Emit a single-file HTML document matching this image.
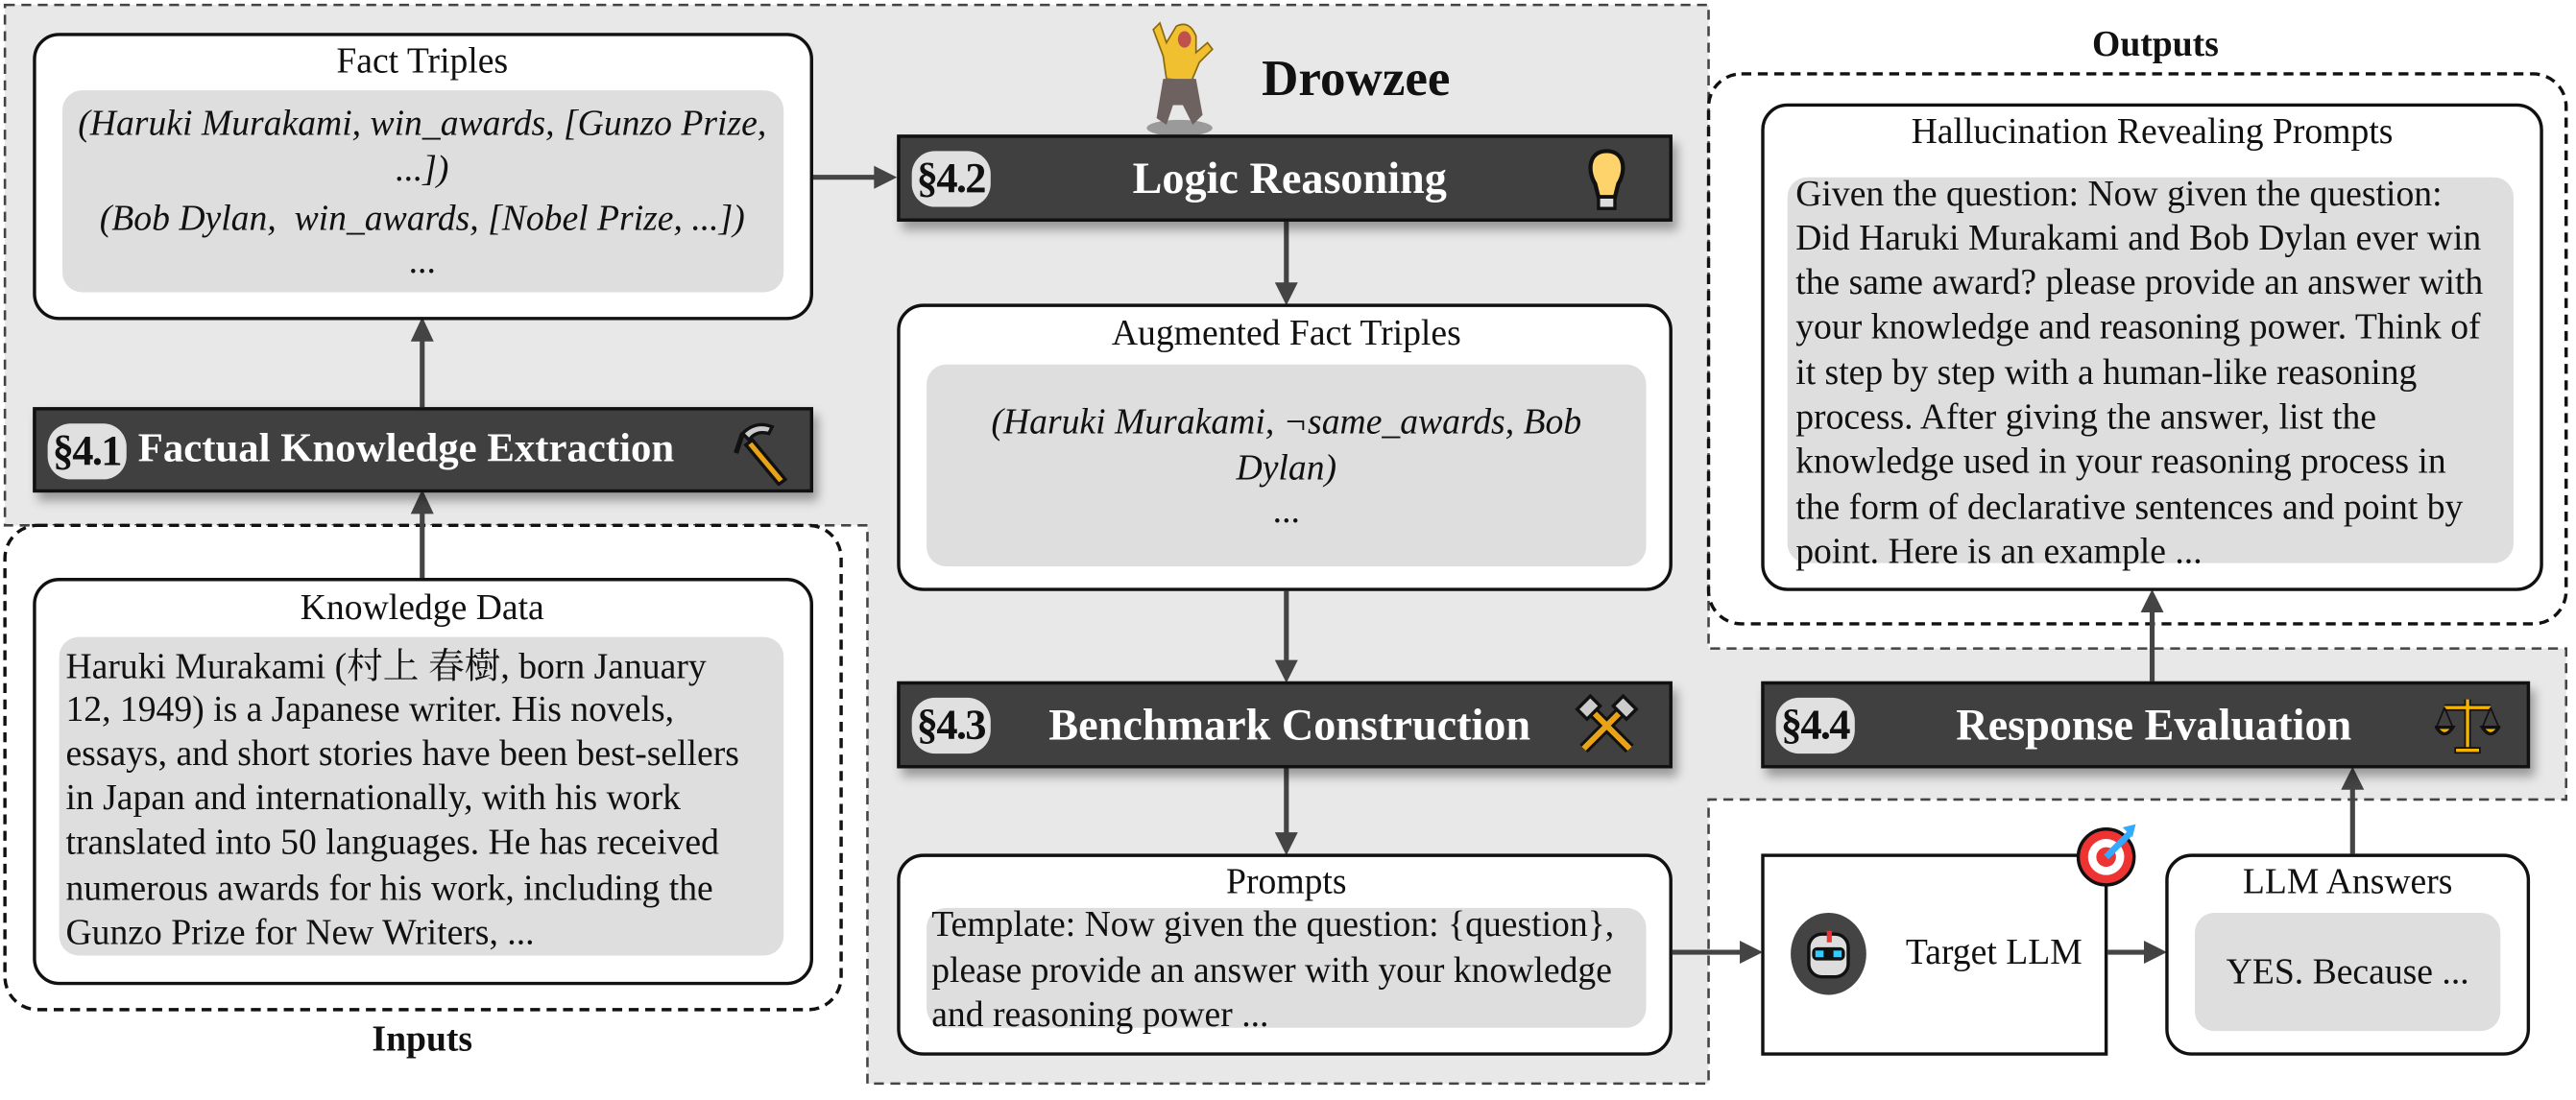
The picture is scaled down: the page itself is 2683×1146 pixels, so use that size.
<!DOCTYPE html>
<html><head><meta charset="utf-8"><style>
html,body{margin:0;padding:0;background:#fff;width:2683px;height:1146px;overflow:hidden}
#s{position:absolute;left:0;top:0;width:1568px;height:670px;transform-origin:0 0;transform:scale(1.7111,1.7104);font-family:"Liberation Serif","Times New Roman",serif;color:#111}
.a{position:absolute}
.cjk{font-family:"Noto Serif CJK SC","Noto Sans CJK SC",serif}
.box{position:absolute;background:#fff;border:2px solid #111;border-radius:16px;box-sizing:border-box}
.in{position:absolute;background:#dedede;border-radius:12px}
.t{position:absolute;white-space:nowrap;font-size:22px;line-height:22px}
.c{text-align:center;transform:translateX(-50%)}
.i{font-style:italic}
.bar{position:absolute;background:#404040;border:2px solid #111;box-sizing:border-box;box-shadow:3px 5px 6px rgba(0,0,0,.35)}
.bt{position:absolute;color:#fff;font-weight:bold;font-size:27px;white-space:nowrap;top:50%;transform:translateY(-50%)}
.bd{position:absolute;background:#e0e0e0;color:#111;font-weight:bold;font-size:26px;border-radius:14px;height:34px;line-height:34px;top:8px;padding:0 3px;letter-spacing:-1px}
</style></head><body><div id="s">
<svg class="a" style="left:0;top:0" width="1568" height="670">
<path d="M3,3 H1040 V395 H1562 V487 H1040 V660 H528 V320 H3 Z" fill="#e8e8e8" stroke="#444" stroke-width="1.5" stroke-dasharray="6,4"/>
<rect x="3" y="320" width="509" height="295" rx="20" fill="#fff" stroke="#111" stroke-width="2" stroke-dasharray="6,4"/>
<rect x="1040" y="45" width="522" height="335" rx="20" fill="none" stroke="#111" stroke-width="2" stroke-dasharray="6,4"/>
<g stroke="#444" stroke-width="3" fill="#444">
<line x1="257" y1="248" x2="257" y2="205"/><path d="M250,208 L257,193 L264,208 Z" stroke="none"/>
<line x1="257" y1="352" x2="257" y2="310"/><path d="M250,313 L257,298 L264,313 Z" stroke="none"/>
<line x1="495" y1="108" x2="535" y2="108"/><path d="M532,101 L546,108 L532,115 Z" stroke="none"/>
<line x1="783" y1="135" x2="783" y2="175"/><path d="M776,172 L783,186 L790,172 Z" stroke="none"/>
<line x1="783" y1="360" x2="783" y2="405"/><path d="M776,402 L783,416 L790,402 Z" stroke="none"/>
<line x1="783" y1="468" x2="783" y2="510"/><path d="M776,507 L783,521 L790,507 Z" stroke="none"/>
<line x1="1018" y1="580" x2="1062" y2="580"/><path d="M1059,573 L1073,580 L1059,587 Z" stroke="none"/>
<line x1="1283" y1="580" x2="1308" y2="580"/><path d="M1305,573 L1319,580 L1305,587 Z" stroke="none"/>
<line x1="1432" y1="520" x2="1432" y2="478"/><path d="M1425,481 L1432,467 L1439,481 Z" stroke="none"/>
<line x1="1310" y1="415" x2="1310" y2="370"/><path d="M1303,373 L1310,359 L1317,373 Z" stroke="none"/>
</g>
</svg>
<div class="t c" style="left:1312px;top:16px;font-weight:bold">Outputs</div>
<div class="t c" style="left:257px;top:622px;font-weight:bold">Inputs</div>

<div class="box" style="left:20px;top:20px;width:475px;height:175px"></div>
<div class="t c" style="left:257px;top:26px">Fact Triples</div>
<div class="in" style="left:38px;top:55px;width:439px;height:123px"></div>
<div class="t c i" style="left:257px;top:64px">(Haruki Murakami, win_awards, [Gunzo Prize,</div>
<div class="t c i" style="left:257px;top:92px">...])</div>
<div class="t c i" style="left:257px;top:122px">(Bob Dylan,&nbsp; win_awards, [Nobel Prize, ...])</div>
<div class="t c" style="left:257px;top:148px">...</div>

<div class="bar" style="left:20px;top:248px;width:475px;height:52px"><div class="bd" style="left:7px">§4.1</div><div class="bt" style="left:62px;font-size:25px">Factual Knowledge Extraction</div>
<svg class="a" style="left:420px;top:6px" width="40" height="40"><path d="M10,8 Q18,0 28,4 L26,8 Q18,6 14,12 Z" fill="#ccc" stroke="#111" stroke-width="2"/><path d="M16,12 L36,36 L32,39 L12,15 Z" fill="#e8a317" stroke="#111" stroke-width="2"/><path d="M10,8 L6,20" stroke="#111" stroke-width="3"/></svg></div>

<div class="box" style="left:20px;top:352px;width:475px;height:248px"></div>
<div class="t c" style="left:257px;top:359px">Knowledge Data</div>
<div class="in" style="left:36px;top:388px;width:441px;height:194px"></div>
<div class="t" style="left:40px;top:394px">Haruki Murakami (<span class="cjk">村上 春樹</span>, born January</div>
<div class="t" style="left:40px;top:421px">12, 1949) is a Japanese writer. His novels,</div>
<div class="t" style="left:40px;top:448px">essays, and short stories have been best-sellers</div>
<div class="t" style="left:40px;top:475px">in Japan and internationally, with his work</div>
<div class="t" style="left:40px;top:502px">translated into 50 languages. He has received</div>
<div class="t" style="left:40px;top:530px">numerous awards for his work, including the</div>
<div class="t" style="left:40px;top:557px">Gunzo Prize for New Writers, ...</div>

<svg class="a" style="left:680px;top:8px" width="85" height="76"><ellipse cx="38" cy="70" rx="20" ry="5" fill="#9a9a9a"/><path d="M22,10 L28,26 L30,40 L45,42 L50,30 L58,22 L55,18 L48,24 L48,14 Q44,4 36,8 L30,18 L26,6 Z" fill="#f0c030" stroke="#8a6a10" stroke-width="1"/><path d="M28,40 L48,40 L52,62 L46,68 L40,56 L34,56 L30,68 L24,64 Z" fill="#6e6260"/><ellipse cx="41" cy="16" rx="4" ry="5" fill="#c0504d"/></svg>
<div class="a" style="left:768px;top:30px;font-size:31px;font-weight:bold;white-space:nowrap">Drowzee</div>

<div class="bar" style="left:546px;top:82px;width:472px;height:53px"><div class="bd" style="left:7px">§4.2</div><div class="bt" style="left:237px;transform:translate(-50%,-50%)">Logic Reasoning</div>
<svg class="a" style="left:415px;top:6px" width="30" height="40"><path d="M15,2 C4,2 3,14 8,22 L10,30 H20 L22,22 C27,14 26,2 15,2 Z" fill="#ffd36b" stroke="#111" stroke-width="2.5"/><rect x="10" y="30" width="10" height="7" fill="#ddd" stroke="#111" stroke-width="2"/></svg></div>

<div class="box" style="left:546px;top:185px;width:472px;height:175px"></div>
<div class="t c" style="left:783px;top:192px">Augmented Fact Triples</div>
<div class="in" style="left:564px;top:222px;width:438px;height:123px"></div>
<div class="t c i" style="left:783px;top:246px">(Haruki Murakami, ¬same_awards, Bob</div>
<div class="t c i" style="left:783px;top:274px">Dylan)</div>
<div class="t c" style="left:783px;top:300px">...</div>

<div class="bar" style="left:546px;top:415px;width:472px;height:53px"><div class="bd" style="left:7px">§4.3</div><div class="bt" style="left:237px;transform:translate(-50%,-50%)">Benchmark Construction</div>
<svg class="a" style="left:410px;top:5px" width="40" height="40"><path d="M6,34 L34,6 M34,34 L6,6" stroke="#111" stroke-width="7"/><path d="M6,34 L34,6 M34,34 L6,6" stroke="#e8a317" stroke-width="3.5"/><path d="M2,10 L10,2 L16,8 L8,16 Z M38,10 L30,2 L24,8 L32,16 Z" fill="#ccc" stroke="#111" stroke-width="2"/></svg></div>

<div class="box" style="left:546px;top:520px;width:472px;height:123px"></div>
<div class="t c" style="left:783px;top:526px">Prompts</div>
<div class="in" style="left:564px;top:553px;width:438px;height:73px"></div>
<div class="t" style="left:567px;top:552px">Template: Now given the question: {question},</div>
<div class="t" style="left:567px;top:580px">please provide an answer with your knowledge</div>
<div class="t" style="left:567px;top:607px">and reasoning power ...</div>

<div class="a" style="left:1072px;top:520px;width:211px;height:123px;border:2px solid #111;background:#fff;box-sizing:border-box"></div>
<svg class="a" style="left:1089px;top:555px" width="48" height="52"><ellipse cx="24" cy="26" rx="23" ry="25" fill="#444"/><rect x="12" y="14" width="24" height="26" rx="8" fill="#ddd" stroke="#111" stroke-width="2"/><rect x="14" y="22" width="20" height="8" rx="3" fill="#111"/><rect x="16" y="24" width="5" height="4" fill="#3cf"/><rect x="27" y="24" width="5" height="4" fill="#3cf"/><rect x="23" y="12" width="3" height="7" fill="#e33"/></svg>
<div class="t" style="left:1160px;top:569px">Target LLM</div>
<svg class="a" style="left:1262px;top:500px" width="42" height="42"><circle cx="20" cy="22" r="17" fill="#e33" stroke="#111" stroke-width="2"/><circle cx="20" cy="22" r="11" fill="#fff"/><circle cx="20" cy="22" r="6" fill="#e33"/><path d="M20,22 L34,8" stroke="#3af" stroke-width="4"/><path d="M30,4 L38,2 L36,10 Z" fill="#3af"/></svg>

<div class="box" style="left:1318px;top:520px;width:222px;height:123px"></div>
<div class="t c" style="left:1429px;top:526px">LLM Answers</div>
<div class="in" style="left:1336px;top:556px;width:186px;height:72px"></div>
<div class="t c" style="left:1429px;top:581px">YES. Because ...</div>

<div class="bar" style="left:1072px;top:415px;width:468px;height:53px"><div class="bd" style="left:7px">§4.4</div><div class="bt" style="left:237px;transform:translate(-50%,-50%)">Response Evaluation</div>
<svg class="a" style="left:408px;top:6px" width="40" height="40"><path d="M20,3 V32 M6,8 H34 M12,34 H28" stroke="#111" stroke-width="4"/><path d="M20,3 V32 M6,8 H34 M13,34 H27" stroke="#f5b400" stroke-width="2"/><path d="M1,20 Q6,28 11,20 Z M29,20 Q34,28 39,20 Z" fill="#f5b400" stroke="#111" stroke-width="2"/><path d="M6,8 L1,20 M6,8 L11,20 M34,8 L29,20 M34,8 L39,20" stroke="#111" stroke-width="1"/></svg></div>

<div class="box" style="left:1072px;top:63px;width:476px;height:297px"></div>
<div class="t c" style="left:1310px;top:69px">Hallucination Revealing Prompts</div>
<div class="in" style="left:1088px;top:108px;width:442px;height:235px"></div>
<div class="t" style="left:1093px;top:107px">Given the question: Now given the question:</div>
<div class="t" style="left:1093px;top:134px">Did Haruki Murakami and Bob Dylan ever win</div>
<div class="t" style="left:1093px;top:161px">the same award? please provide an answer with</div>
<div class="t" style="left:1093px;top:188px">your knowledge and reasoning power. Think of</div>
<div class="t" style="left:1093px;top:216px">it step by step with a human-like reasoning</div>
<div class="t" style="left:1093px;top:243px">process. After giving the answer, list the</div>
<div class="t" style="left:1093px;top:270px">knowledge used in your reasoning process in</div>
<div class="t" style="left:1093px;top:298px">the form of declarative sentences and point by</div>
<div class="t" style="left:1093px;top:325px">point. Here is an example ...</div>
</div></body></html>
